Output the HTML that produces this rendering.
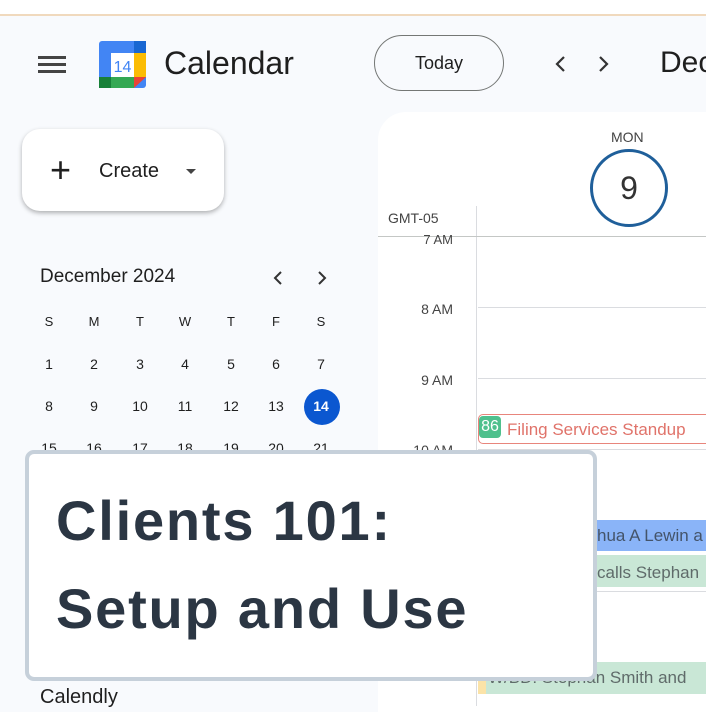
<!DOCTYPE html>
<html><head><style>
body{margin:0;width:706px;height:706px;overflow:hidden;background:#f8fafd;font-family:"Liberation Sans",sans-serif;position:relative;color:#1f1f1f}
.a{position:absolute}
.d{position:absolute;width:46px;text-align:center;font-size:14px;color:#1f1f1f}
.hl{position:absolute;left:478px;right:0;height:1px;background:#dadce0}
.t{position:absolute;right:253px;font-size:14px;color:#444;text-align:right}
</style></head><body>
<div class="a" style="left:0;top:0;width:706px;height:14px;background:#fff"></div>
<div class="a" style="left:0;top:14px;width:706px;height:2px;background:#f0d9bd"></div>
<div class="a" style="left:38px;top:56px;width:28px;height:3px;background:#444;box-shadow:0 7px 0 #444,0 14px 0 #444"></div>
<svg class="a" style="left:99px;top:41px" width="47" height="47" viewBox="0 0 47 47">
<rect x="0" y="0" width="47" height="47" rx="3" fill="#4285f4"/>
<rect x="35" y="0" width="12" height="12" fill="#1967d2"/>
<rect x="35" y="12" width="12" height="24" fill="#fbbc04"/>
<rect x="0" y="36" width="35" height="11" fill="#34a853"/>
<rect x="0" y="36" width="12" height="11" fill="#188038"/>
<polygon points="35,36 47,36 35,47" fill="#ea4335"/>
<rect x="12" y="12" width="23" height="24" fill="#fff"/>
<text x="23.5" y="31" font-size="16" text-anchor="middle" fill="#4285f4" font-family="Liberation Sans">14</text>
</svg>
<div class="a" style="left:164px;top:45px;font-size:32px;color:#1f1f1f">Calendar</div>
<div class="a" style="left:374px;top:35px;width:130px;height:56px;border:1.5px solid #747775;border-radius:28px;box-sizing:border-box;text-align:center;line-height:54px;font-size:18px">Today</div>
<svg class="a" style="left:552px;top:55px" width="60" height="18" viewBox="0 0 60 18"><path d="M12 2 L5 9 L12 16 M48 2 L55 9 L48 16" stroke="#333" stroke-width="2.2" fill="none"/></svg>
<div class="a" style="left:660px;top:46px;font-size:30px">Dec</div>
<div class="a" style="left:22px;top:129px;width:202px;height:82px;background:#fff;border-radius:18px;box-shadow:0 2px 5px rgba(0,0,0,.3)"></div>
<div class="a" style="left:50px;top:150px;font-size:36px;font-weight:300;line-height:40px">+</div>
<div class="a" style="left:99px;top:160px;font-size:20px">Create</div>
<div class="a" style="left:186px;top:169px;border:5px solid transparent;border-top:5px solid #444"></div>
<div class="a" style="left:40px;top:266px;font-size:19px">December 2024</div>
<svg class="a" style="left:272px;top:270px" width="60" height="16" viewBox="0 0 60 16"><path d="M9 2 L3 8 L9 14 M47 2 L53 8 L47 14" stroke="#333" stroke-width="2" fill="none"/></svg>
<div class="a" style="left:304px;top:389px;width:36px;height:36px;border-radius:50%;background:#0b57d0"></div>
<div class="a" style="left:26px;top:314px">
<div class="d" style="left:0;top:0;font-size:13px">S</div><div class="d" style="left:45px;top:0;font-size:13px">M</div><div class="d" style="left:91px;top:0;font-size:13px">T</div><div class="d" style="left:136px;top:0;font-size:13px">W</div><div class="d" style="left:182px;top:0;font-size:13px">T</div><div class="d" style="left:227px;top:0;font-size:13px">F</div><div class="d" style="left:272px;top:0;font-size:13px">S</div>
<div class="d" style="left:0;top:42px">1</div><div class="d" style="left:45px;top:42px">2</div><div class="d" style="left:91px;top:42px">3</div><div class="d" style="left:136px;top:42px">4</div><div class="d" style="left:182px;top:42px">5</div><div class="d" style="left:227px;top:42px">6</div><div class="d" style="left:272px;top:42px">7</div>
<div class="d" style="left:0;top:84px">8</div><div class="d" style="left:45px;top:84px">9</div><div class="d" style="left:91px;top:84px">10</div><div class="d" style="left:136px;top:84px">11</div><div class="d" style="left:182px;top:84px">12</div><div class="d" style="left:227px;top:84px">13</div><div class="d" style="left:272px;top:84px;color:#fff;font-weight:bold">14</div>
<div class="d" style="left:0;top:126px">15</div><div class="d" style="left:45px;top:126px">16</div><div class="d" style="left:91px;top:126px">17</div><div class="d" style="left:136px;top:126px">18</div><div class="d" style="left:182px;top:126px">19</div><div class="d" style="left:227px;top:126px">20</div><div class="d" style="left:272px;top:126px">21</div>
</div>
<div class="a" style="left:40px;top:686px;font-size:20px">Calendly</div>
<div class="a" style="left:378px;top:112px;width:340px;height:600px;background:#fff;border-top-left-radius:28px"></div>
<div class="a" style="left:611px;top:129px;font-size:14px;color:#444">MON</div>
<div class="a" style="left:590px;top:149px;width:78px;height:78px;border:3px solid #1f5f9a;border-radius:50%;box-sizing:border-box;text-align:center;line-height:72px;font-size:32px;color:#333">9</div>
<div class="a" style="left:388px;top:210px;font-size:14px;color:#444">GMT-05</div>
<div class="a" style="left:476px;top:206px;width:1px;height:500px;background:#dadce0"></div>
<div class="a" style="left:378px;top:236px;width:330px;height:1px;background:#c4c7c5"></div>
<div class="t" style="top:232px;font-size:13px">7 AM</div>
<div class="t" style="top:301px">8 AM</div>
<div class="t" style="top:372px">9 AM</div>
<div class="t" style="top:442px">10 AM</div>
<div class="hl" style="top:307px"></div><div class="hl" style="top:378px"></div><div class="hl" style="top:449px"></div><div class="hl" style="top:591px"></div>
<div class="a" style="left:478px;top:414px;width:240px;height:30px;border:1.5px solid #e8857c;border-radius:5px;box-sizing:border-box;background:#fff"></div>
<div class="a" style="left:479px;top:416px;width:22px;height:22px;background:#4fc08d;border-radius:4px;color:#fff;font-size:16px;text-align:center;line-height:22px">86</div>
<div class="a" style="left:507px;top:420px;font-size:17px;color:#e0736a;white-space:nowrap">Filing Services Standup</div>
<div class="a" style="left:480px;top:520px;width:240px;height:31px;background:#8ab4f8;border-radius:3px"></div>
<div class="a" style="left:597px;top:526px;font-size:17px;color:#44546a;white-space:nowrap">hua A Lewin a</div>
<div class="a" style="left:480px;top:555px;width:240px;height:32px;background:#c9e7d6;border-radius:3px"></div>
<div class="a" style="left:597px;top:563px;font-size:17px;color:#5f6b6a;white-space:nowrap">calls Stephan</div>
<div class="a" style="left:480px;top:662px;width:240px;height:32px;background:#c9e7d6;border-radius:3px"></div>
<div class="a" style="left:478px;top:662px;width:8px;height:32px;background:#fbe3a8"></div>
<div class="a" style="left:488px;top:668px;font-size:17px;color:#5f6b6a;white-space:nowrap">W/BD: Stephan Smith and</div>
<div class="a" style="left:25px;top:450px;width:572px;height:231px;background:#fff;border:4px solid #c6d0da;border-radius:9px;box-sizing:border-box"></div>
<div class="a" style="left:56px;top:477px;font-size:56px;font-weight:bold;color:#2b3643;line-height:88px;letter-spacing:1.8px">Clients 101:<br>Setup and Use</div>
</body></html>
